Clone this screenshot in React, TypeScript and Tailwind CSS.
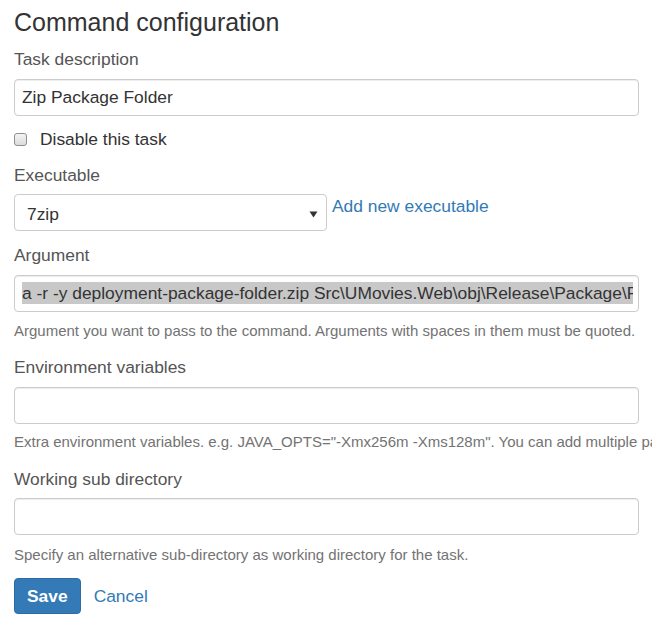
import React from "react";

const font = { fontFamily: '"Liberation Sans", Arial, sans-serif' };

function Label({ children, className = "" }: { children: React.ReactNode; className?: string }) {
  return <div className={`text-[17.4px] leading-[24px] text-[#555] ${className}`}>{children}</div>;
}

function Help({ children, className = "" }: { children: React.ReactNode; className?: string }) {
  return <div className={`text-[15px] leading-[20px] text-[#737373] whitespace-nowrap ${className}`}>{children}</div>;
}

function Box({ children, className = "" }: { children?: React.ReactNode; className?: string }) {
  return (
    <div
      className={`h-[37px] w-[625px] rounded-[4px] border border-[#ccc] bg-white flex items-center pl-[7px] pr-[5px] shadow-[inset_0_1px_1px_rgba(0,0,0,0.075)] ${className}`}
    >
      {children}
    </div>
  );
}

export default function App() {
  return (
    <div className="w-[652px] h-[633px] overflow-hidden bg-white text-[#333]" style={font}>
      <div className="pl-[14px]">
        <h1 className="mt-[7px] text-[25px] leading-[30px] font-normal text-[#333]">Command configuration</h1>

        <Label className="mt-[10px]">Task description</Label>
        <Box className="mt-[8px]">
          <span className="text-[17.4px] text-[#333]">Zip Package Folder</span>
        </Box>

        <div className="mt-[11px] h-[24px] flex items-center">
          <div className="w-[13px] h-[13px] rounded-[3px] border border-[#8f8f8f] bg-gradient-to-b from-[#f4f4f4] to-[#dcdcdc]" />
          <span className="ml-[13px] text-[17.4px] text-[#333]">Disable this task</span>
        </div>

        <Label className="mt-[12px]">Executable</Label>
        <div className="mt-[7px] flex items-start">
          <div className="h-[37px] w-[313px] rounded-[4px] border border-[#ccc] bg-white flex items-center justify-between pl-[12px] pr-[6px]">
            <span className="text-[17.4px] text-[#333] mt-[3px]">7zip</span>
            <svg width="9" height="7" viewBox="0 0 9 7" className="mt-[3px] mr-[2px]">
              <path d="M0.5 0.5 L8.5 0.5 L4.5 6.5 Z" fill="#333" />
            </svg>
          </div>
          <a className="ml-[5px] text-[17.4px] leading-[24px] text-[#337ab7]">Add new executable</a>
        </div>

        <Label className="mt-[12px]">Argument</Label>
        <Box className="mt-[8px]">
          <div className="overflow-hidden whitespace-nowrap w-full">
            <span className="bg-[#c8c8c8] text-[17.4px] leading-[22px] text-[#333] inline-block">
              a -r -y deployment-package-folder.zip Src\UMovies.Web\obj\Release\Package\PackageTmp\*
            </span>
          </div>
        </Box>
        <Help className="mt-[9px]">
          Argument you want to pass to the command. Arguments with spaces in them must be quoted.
        </Help>

        <Label className="mt-[14px]">Environment variables</Label>
        <Box className="mt-[8px]" />
        <Help className="mt-[8px]">
          Extra environment variables. e.g. JAVA_OPTS="-Xmx256m -Xms128m". You can add multiple parameters separated by space.
        </Help>

        <Label className="mt-[15px]">Working sub directory</Label>
        <Box className="mt-[7px]" />
        <Help className="mt-[10px]">Specify an alternative sub-directory as working directory for the task.</Help>

        <div className="mt-[13px] flex items-center">
          <button className="h-[36px] px-[12px] rounded-[4px] bg-[#337ab7] border border-[#2e6da4] text-white font-bold text-[17.4px]">
            Save
          </button>
          <a className="ml-[13px] text-[17.4px] text-[#337ab7]">Cancel</a>
        </div>
      </div>
    </div>
  );
}
